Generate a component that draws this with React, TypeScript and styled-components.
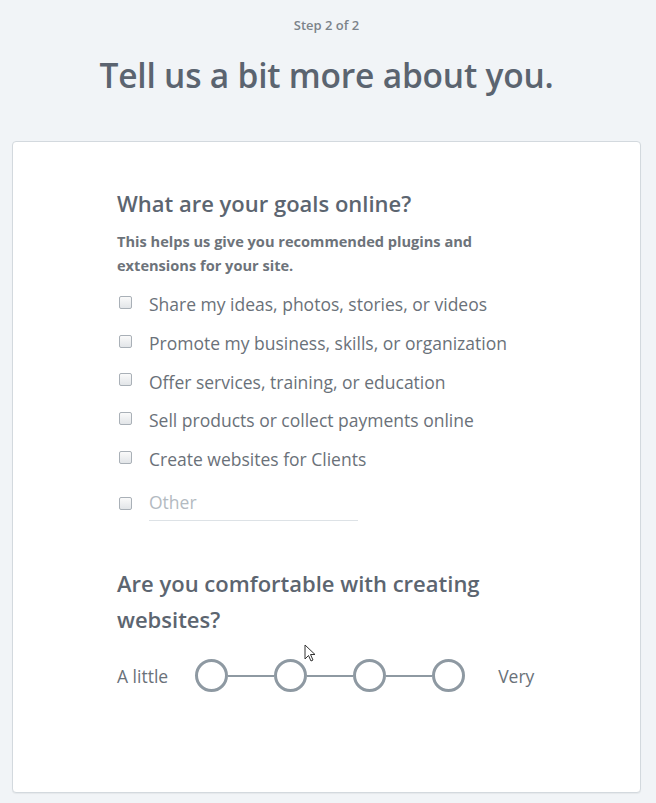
import React from "react";
import styled, { createGlobalStyle } from "styled-components";

const Global = createGlobalStyle`
  html, body { margin: 0; padding: 0; background: #f1f4f7; }
  body { font-family: "Open Sans", "Noto Sans", sans-serif; }
`;

const Page = styled.div`
  width: 656px;
  min-height: 803px;
  box-sizing: border-box;
  padding: 15px 15px 12px 12px;
  display: flex;
  flex-direction: column;
  align-items: stretch;
`;

const Step = styled.div`
  text-align: center;
  font-size: 13px;
  font-weight: 600;
  color: #7c838a;
  line-height: 20px;
`;

const Title = styled.h1`
  margin: 18px 0 0;
  text-align: center;
  font-size: 33.5px;
  font-weight: 600;
  color: #5b6470;
  line-height: 44px;
  letter-spacing: -0.2px;
`;

const Card = styled.div`
  margin-top: 44px;
  background: #fff;
  border: 1px solid #d3d9de;
  border-radius: 4px;
  box-shadow: 0 1px 1px rgba(0, 0, 0, 0.05);
  padding: 43px 40px 100px 104px;
  flex: 1;
`;

const Heading = styled.h2`
  margin: 0;
  font-size: 22px;
  font-weight: 600;
  color: #5c6570;
  line-height: 36px;
`;

const Sub = styled.p`
  margin: 8px 0 8px;
  font-size: 14.6px;
  font-weight: 700;
  color: #6d737a;
  line-height: 24px;
  max-width: 400px;
`;

const List = styled.div`
  display: flex;
  flex-direction: column;
`;

const Row = styled.label`
  display: flex;
  align-items: center;
  height: 38.7px;
  gap: 17px;
  padding-left: 2px;
`;

const Box = styled.span`
  width: 11px;
  height: 11px;
  border: 1px solid #a9b0b7;
  border-radius: 2px;
  background: linear-gradient(#fafafa, #e2e5e8);
  flex: none;
  margin-top: -4px;
`;

const Label = styled.span`
  font-size: 17.5px;
  color: #6a7179;
  line-height: 24px;
`;

const OtherRow = styled(Row)`
  height: auto;
  margin-top: 12px;
`;

const OtherInput = styled.div`
  width: 209px;
  border-bottom: 1px solid #dde2e6;
  font-size: 17.5px;
  color: #b3bac1;
  line-height: 24px;
  padding: 0 0 6px;
`;

const Section = styled.div`
  margin-top: 44px;
`;

const Heading2 = styled(Heading)`
  max-width: 400px;
`;

const Scale = styled.div`
  display: flex;
  align-items: center;
  margin-top: 22px;
`;

const ScaleLabel = styled.span`
  font-size: 17.5px;
  color: #6a7179;
  line-height: 24px;
`;

const Track = styled.div`
  display: flex;
  align-items: center;
  margin: 0 33px 0 27px;
`;

const Dot = styled.span`
  width: 27px;
  height: 27px;
  border: 3px solid #8e99a2;
  border-radius: 50%;
  background: #fff;
  flex: none;
`;

const Line = styled.span`
  width: 46px;
  height: 2px;
  background: #8e99a2;
  flex: none;
`;

const Cursor = styled.svg`
  position: absolute;
  left: 304px;
  top: 644px;
`;

const goals = [
  "Share my ideas, photos, stories, or videos",
  "Promote my business, skills, or organization",
  "Offer services, training, or education",
  "Sell products or collect payments online",
  "Create websites for Clients",
];

export default function App() {
  return (
    <>
      <Global />
      <Page>
        <Step>Step 2 of 2</Step>
        <Title>Tell us a bit more about you.</Title>
        <Card>
          <Heading>What are your goals online?</Heading>
          <Sub>This helps us give you recommended plugins and extensions for your site.</Sub>
          <List>
            {goals.map((g) => (
              <Row key={g}>
                <Box />
                <Label>{g}</Label>
              </Row>
            ))}
            <OtherRow>
              <Box />
              <OtherInput>Other</OtherInput>
            </OtherRow>
          </List>
          <Section>
            <Heading2>Are you comfortable with creating websites?</Heading2>
            <Scale>
              <ScaleLabel>A little</ScaleLabel>
              <Track>
                <Dot />
                <Line />
                <Dot />
                <Line />
                <Dot />
                <Line />
                <Dot />
              </Track>
              <ScaleLabel>Very</ScaleLabel>
            </Scale>
          </Section>
        </Card>
      </Page>
      <Cursor width="14" height="20" viewBox="0 0 14 20">
        <path d="M1 1 L1 15 L4.5 11.5 L7 17 L9 16 L6.5 10.5 L11 10.5 Z" fill="#fff" stroke="#333" strokeWidth="1" />
      </Cursor>
    </>
  );
}
